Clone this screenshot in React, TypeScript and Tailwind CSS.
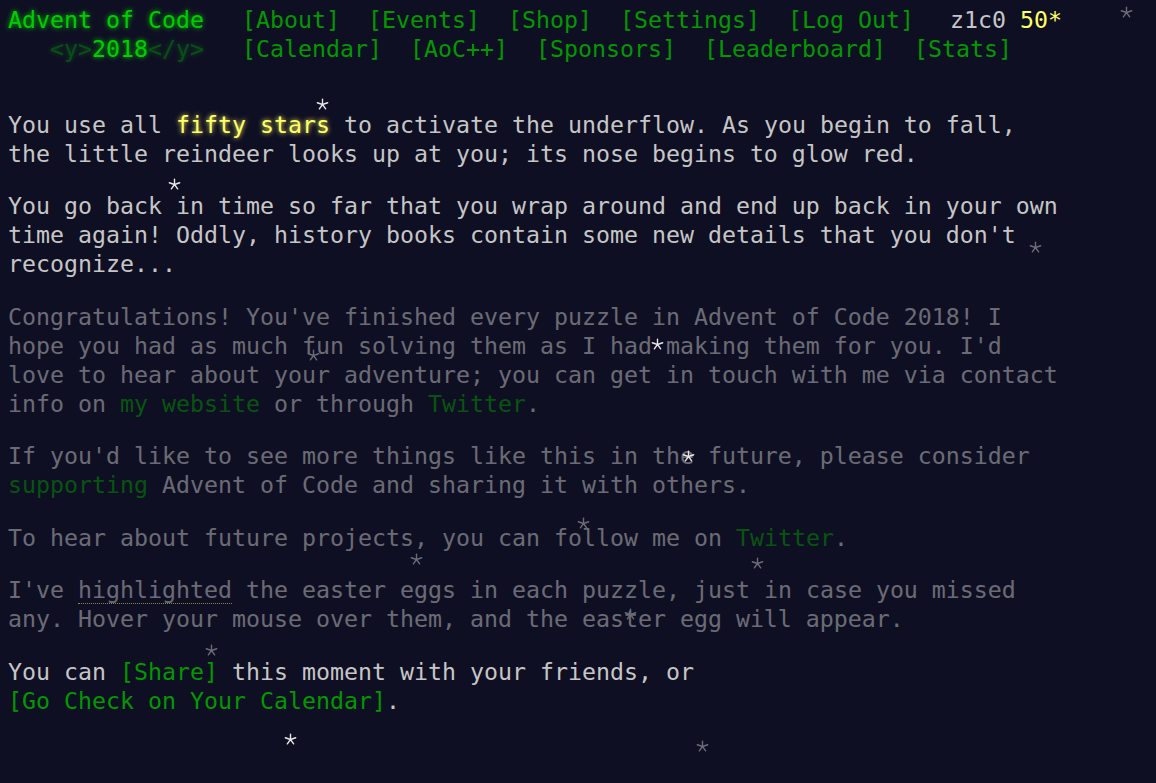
import type { ReactNode } from "react";

// ── decorative background stars (x, y = centre, bright = white) ──
const STARS = [
  { x: 1126, y: 12, bright: false },
  { x: 322, y: 104, bright: true },
  { x: 174, y: 184, bright: true },
  { x: 1035, y: 247, bright: false },
  { x: 313, y: 355, bright: false },
  { x: 657, y: 344, bright: true },
  { x: 688, y: 456, bright: true },
  { x: 583, y: 523, bright: false },
  { x: 416, y: 559, bright: false },
  { x: 757, y: 563, bright: false },
  { x: 630, y: 614, bright: false },
  { x: 211, y: 650, bright: false },
  { x: 290, y: 739, bright: true },
  { x: 702, y: 746, bright: false },
];

const NAV_TOP = ["[About]", "[Events]", "[Shop]", "[Settings]", "[Log Out]"];
const NAV_BOTTOM = ["[Calendar]", "[AoC++]", "[Sponsors]", "[Leaderboard]", "[Stats]"];

function Star({ x, y, bright }: { x: number; y: number; bright: boolean }) {
  return (
    <svg
      className={`absolute w-[13px] h-[13px] ${bright ? "text-[#e6e6e6]" : "text-[#6b6b78]"}`}
      style={{ left: x - 6.5, top: y - 6.5 }}
      viewBox="0 0 12 12"
      fill="none"
      stroke="currentColor"
      strokeWidth={1.3}
      strokeLinecap="round"
    >
      <path d="M6 6 L6 1 M6 6 L10.8 4.4 M6 6 L8.9 10 M6 6 L3.1 10 M6 6 L1.2 4.4" />
    </svg>
  );
}

function NavLink({ children }: { children: ReactNode }) {
  return <a className="px-[14px] text-[#009900] whitespace-pre">{children}</a>;
}

function Link({ children }: { children: ReactNode }) {
  return <a className="text-[#009900]">{children}</a>;
}

export default function App() {
  return (
    <div className="relative min-h-[783px] bg-[#0f0f23] text-[#c6c6c6] font-['DejaVu_Sans_Mono','Liberation_Mono',monospace] text-[23.25px] leading-[29px] px-2 pt-[4.5px] overflow-hidden">
      {/* header */}
      <header className="whitespace-nowrap">
        <div className="flex">
          <h1 className="w-[220px] shrink-0 text-[#00cc00] [text-shadow:0_0_5px_#00cc00]">
            Advent of Code
          </h1>
          <nav className="flex">
            {NAV_TOP.map((l) => (
              <NavLink key={l}>{l}</NavLink>
            ))}
          </nav>
          <div className="ml-[22px] whitespace-pre">
            z1c0 <span className="text-[#ffff66]">50*</span>
          </div>
        </div>
        <div className="flex">
          <h1 className="w-[220px] shrink-0 pl-[42px] text-[#00cc00] [text-shadow:0_0_5px_#00cc00]">
            <span className="opacity-[0.33]">&lt;y&gt;</span>2018<span className="opacity-[0.33]">&lt;/y&gt;</span>
          </h1>
          <nav className="flex">
            {NAV_BOTTOM.map((l) => (
              <NavLink key={l}>{l}</NavLink>
            ))}
          </nav>
        </div>
      </header>

      {/* main */}
      <main className="mt-[47px] max-w-[1052px]">
        <p className="mb-[23.5px]">
          You use all{" "}
          <span className="text-[#ffff66] [text-shadow:0_0_5px_#ffff66]">fifty stars</span> to activate the
          underflow. As you begin to fall, the little reindeer looks up at you; its nose begins to glow red.
        </p>
        <p className="mb-[23.5px]">
          You go back in time so far that you wrap around and end up back in your own time again! Oddly,
          history books contain some new details that you don't recognize...
        </p>
        <p className="mb-[23.5px] opacity-50">
          Congratulations! You've finished every puzzle in Advent of Code 2018! I hope you had as much fun
          solving them as I had making them for you. I'd love to hear about your adventure; you can get in
          touch with me via contact info on <Link>my website</Link> or through <Link>Twitter</Link>.
        </p>
        <p className="mb-[23.5px] opacity-50">
          If you'd like to see more things like this in the future, please consider <Link>supporting</Link>{" "}
          Advent of Code and sharing it with others.
        </p>
        <p className="mb-[23.5px] opacity-50">
          To hear about future projects, you can follow me on <Link>Twitter</Link>.
        </p>
        <p className="mb-[23.5px] opacity-50">
          I've <span className="border-b border-dotted border-[#ffff66]">highlighted</span> the easter eggs in
          each puzzle, just in case you missed any. Hover your mouse over them, and the easter egg will appear.
        </p>
        <p>
          You can <Link>[Share]</Link> this moment with your friends, or{" "}
          <span className="whitespace-nowrap">
            <Link>[Go Check on Your Calendar]</Link>.
          </span>
        </p>
      </main>

      {STARS.map((s, i) => (
        <Star key={i} {...s} />
      ))}
    </div>
  );
}
